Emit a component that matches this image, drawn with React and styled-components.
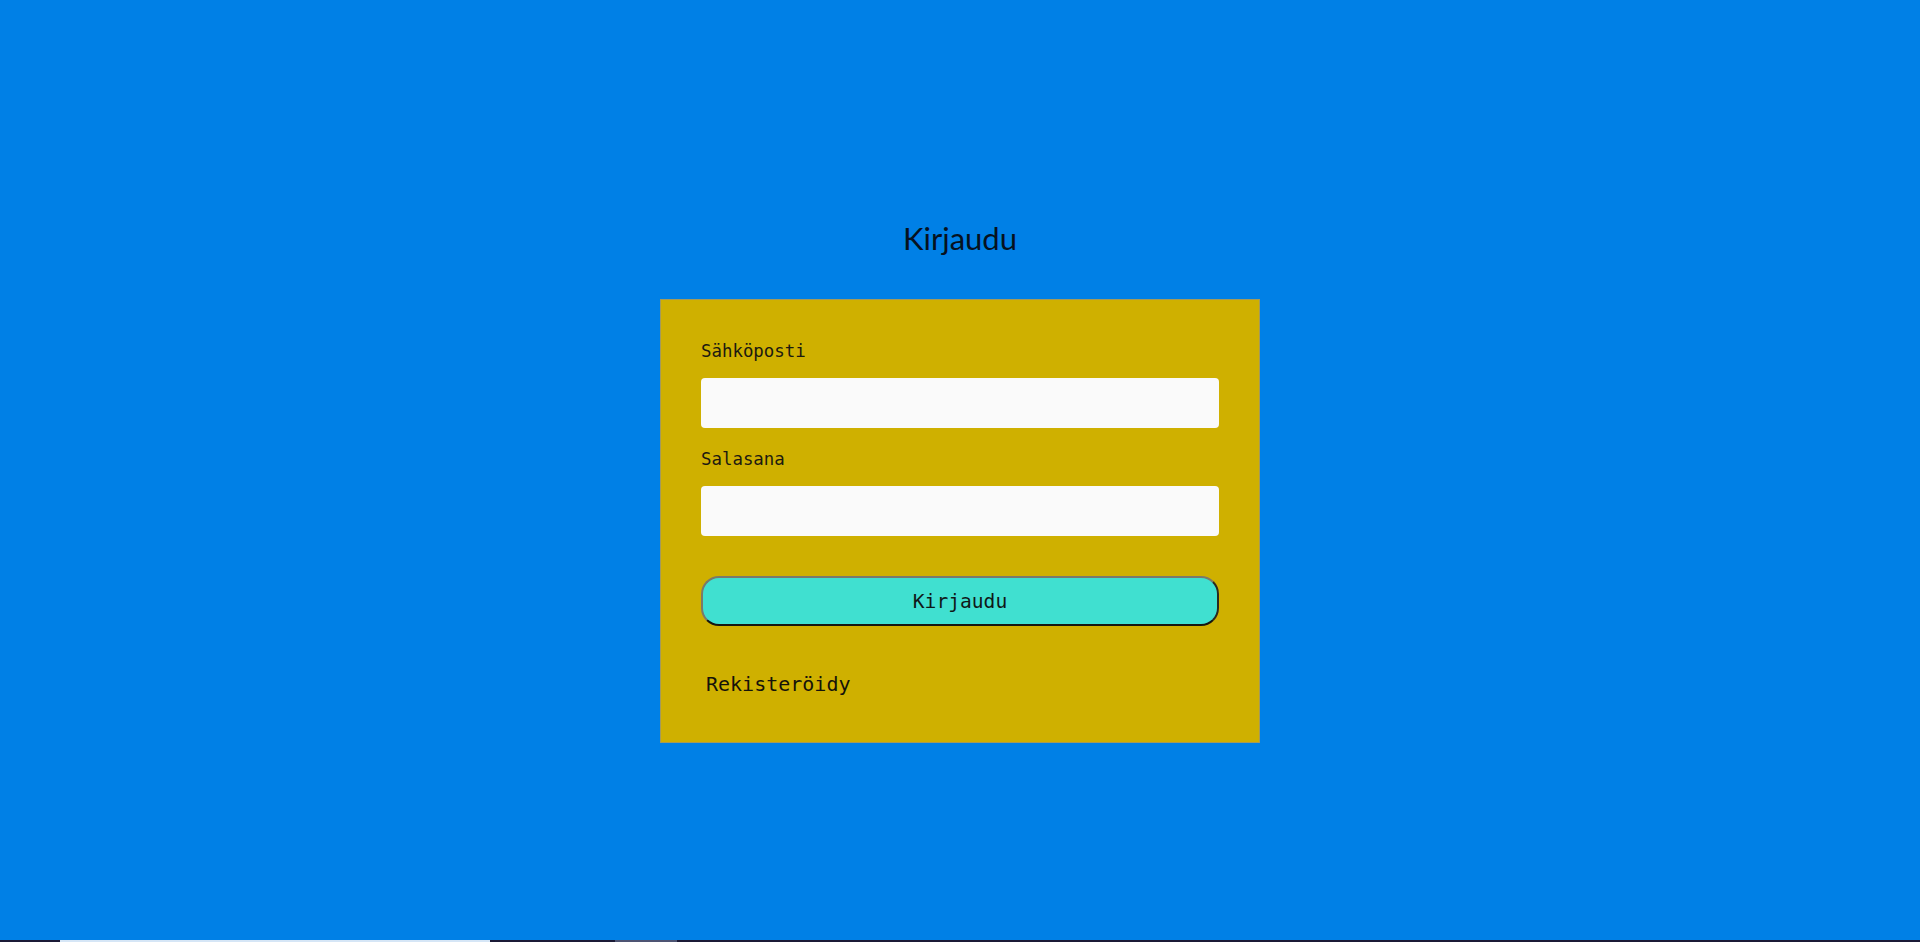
import React from 'react'
import styled, { createGlobalStyle } from 'styled-components'

const GlobalStyle = createGlobalStyle`
  html, body {
    margin: 0;
    padding: 0;
  }
  body {
    background-color: #0080e6;
    font-family: 'DejaVu Sans Mono', monospace;
  }
`

function App() {
  return (
    <Page>
      <GlobalStyle />
      <Main>
        <Title>Kirjaudu</Title>
        <Card>
          <Form onSubmit={(e) => e.preventDefault()}>
            <Label htmlFor='email'>Sähköposti</Label>
            <Input id='email' type='email' />
            <Label htmlFor='password' $spaced>
              Salasana
            </Label>
            <Input id='password' type='password' />
            <SubmitBtn type='submit'>Kirjaudu</SubmitBtn>
            <RegisterLink href='#'>Rekisteröidy</RegisterLink>
          </Form>
        </Card>
      </Main>
      <Taskbar>
        <TaskItem $w='430px' $offset='60px' $color='#d6e6f6' />
        <TaskItem $w='62px' $offset='125px' $color='#4d5473' />
      </Taskbar>
    </Page>
  )
}

export default App

const Page = styled.div`
  display: grid;
  grid-template-rows: 1fr 2px;
  height: 100vh;
  background-color: #0080e6;
`

const Main = styled.main`
  display: flex;
  flex-direction: column;
  align-items: center;
  padding-top: 220px;
`

const Title = styled.h1`
  margin: 0;
  font-family: Lato, 'Open Sans', sans-serif;
  font-size: 31px;
  font-weight: 400;
  line-height: 37px;
  color: #06121f;
`

const Card = styled.div`
  box-sizing: border-box;
  width: 600px;
  margin-top: 42px;
  padding: 41px 40px 46px;
  background-color: #cfb000;
  border: 1px solid #a49a5a;
`

const Form = styled.form`
  display: flex;
  flex-direction: column;
`

const Label = styled.label`
  font-family: 'DejaVu Sans Mono', monospace;
  font-size: 17.4px;
  line-height: 20px;
  color: #1c1a10;
  margin-top: ${(p) => (p.$spaced ? '21px' : '0')};
`

const Input = styled.input`
  box-sizing: border-box;
  height: 50px;
  margin-top: 17px;
  padding: 0 12px;
  border: none;
  border-radius: 4px;
  background-color: #fafafa;
  font-family: 'DejaVu Sans Mono', monospace;
  font-size: 17px;
  outline: none;
`

const SubmitBtn = styled.button`
  box-sizing: border-box;
  height: 50px;
  margin-top: 40px;
  border: 2px solid;
  border-color: #7a7a6a #2a2a20 #161610 #7a7a6a;
  border-radius: 18px;
  background-color: #40e0d0;
  color: #101818;
  font-family: 'DejaVu Sans Mono', monospace;
  font-size: 19.6px;
  cursor: pointer;
`

const RegisterLink = styled.a`
  align-self: flex-start;
  margin-top: 47px;
  padding-left: 5px;
  font-family: 'DejaVu Sans Mono', monospace;
  font-size: 20px;
  line-height: 23px;
  color: #15130a;
  text-decoration: none;
`

const Taskbar = styled.div`
  display: flex;
  background-color: #1b1a36;
`

const TaskItem = styled.div`
  width: ${(p) => p.$w};
  margin-left: ${(p) => p.$offset};
  background-color: ${(p) => p.$color};
`
